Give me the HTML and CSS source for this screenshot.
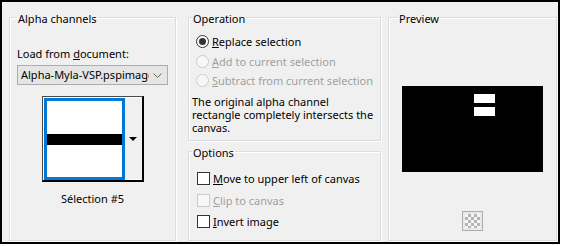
FILE: index.html
```html
<!DOCTYPE html>
<html lang="en">
<head>
  <meta charset="UTF-8" />
  <title>Load Selection From Alpha Channel</title>
  <link rel="stylesheet" href="styles.css">
</head>
<body>

  <div class="dialog">

    <fieldset class="group alpha">
      <legend>Alpha channels</legend>
      <div class="field-label">Load from <u>d</u>ocument:</div>
      <div class="combo">
        <span class="combo-text">Alpha-Myla-VSP.pspimage</span>
        <svg class="chevron" width="9" height="5" viewBox="0 0 9 5">
          <path d="M0.5 0.5 L4.5 4.5 L8.5 0.5" fill="none" stroke="#606060" stroke-width="1"/>
        </svg>
      </div>
      <div class="thumb">
        <div class="thumb-img">
          <div class="thumb-bar"></div>
        </div>
        <div class="thumb-drop">
          <span class="tri"></span>
        </div>
      </div>
      <div class="caption">Sélection #5</div>
    </fieldset>

    <div class="middle">
      <fieldset class="group operation">
        <legend>Operation</legend>
        <div class="radio-row">
          <span class="radio checked"></span>
          <span><u>R</u>eplace selection</span>
        </div>
        <div class="radio-row disabled">
          <span class="radio"></span>
          <span><u>A</u>dd to current selection</span>
        </div>
        <div class="radio-row disabled">
          <span class="radio"></span>
          <span><u>S</u>ubtract from current selection</span>
        </div>
        <p class="note">The original alpha channel<br>rectangle completely intersects the<br>canvas.</p>
      </fieldset>

      <fieldset class="group options">
        <legend>Options</legend>
        <div class="check-row">
          <span class="check"></span>
          <span><u>M</u>ove to upper left of canvas</span>
        </div>
        <div class="check-row disabled">
          <span class="check"></span>
          <span><u>C</u>lip to canvas</span>
        </div>
        <div class="check-row">
          <span class="check"></span>
          <span><u>I</u>nvert image</span>
        </div>
      </fieldset>
    </div>

    <fieldset class="group preview">
      <legend>Preview</legend>
      <div class="preview-canvas">
        <div class="preview-bar"></div>
        <div class="preview-bar"></div>
      </div>
      <div class="checker-btn">
        <div class="checker"></div>
      </div>
    </fieldset>

  </div>

</body>
</html>
```

FILE: styles.css
```css
* {
  margin: 0;
  padding: 0;
  box-sizing: border-box;
}

body {
  background: #ffffff;
  font-family: "Noto Sans", "Open Sans", sans-serif;
  font-size: 11px;
  color: #000;
}

.dialog {
  width: 560px;
  height: 244px;
  border: 2px solid #000;
  background: #f0f0f0;
  display: flex;
  padding: 5px 1px 1px 7px;
  white-space: nowrap;
}

.group {
  border: 1px solid #dcdcdc;
  box-shadow: inset 1px 1px 0 #fff, 1px 1px 0 #fff;
  min-width: 0;
  padding: 0 7px;
}

.group legend {
  line-height: 16px;
  padding: 4px 1px 0 1px;
  margin-left: 0;
}

u {
  text-decoration: underline;
  text-underline-offset: 1px;
}

/* Alpha channels */
.alpha {
  width: 167px;
  margin-right: 12px;
  display: flex;
  flex-direction: column;
}

.field-label {
  line-height: 16px;
  margin-top: 19px;
}

.combo {
  margin-top: 3px;
  width: 151px;
  height: 20px;
  border: 1px solid #adadad;
  background: #e5e5e5;
  display: flex;
  align-items: center;
  padding-left: 3px;
  padding-right: 5px;
}

.combo-text {
  flex: 1;
  overflow: hidden;
  line-height: 16px;
}

.chevron {
  margin-left: 4px;
  flex-shrink: 0;
}

.thumb {
  align-self: center;
  margin-top: 11px;
  width: 102px;
  height: 86px;
  border-style: solid;
  border-color: #4a4a4a #000 #000 #4a4a4a;
  border-width: 1px 2px 2px 1px;
  background: #fff;
  padding: 1px 0 1px 1px;
  display: flex;
}

.thumb-img {
  width: 81px;
  height: 82px;
  border: 3px solid #0078d7;
  background: #fff;
  padding-top: 33px;
}

.thumb-bar {
  height: 11px;
  background: #000;
}

.thumb-drop {
  flex: 1;
  background: #f0f0f0;
  display: flex;
  align-items: center;
  justify-content: center;
}

.tri {
  width: 0;
  height: 0;
  border-left: 4px solid transparent;
  border-right: 4px solid transparent;
  border-top: 4px solid #000;
  margin-top: 1px;
}

.caption {
  text-align: center;
  line-height: 16px;
  margin-top: 9px;
}

/* Middle column */
.middle {
  width: 193px;
  display: flex;
  flex-direction: column;
  margin-right: 7px;
}

.operation {
  height: 134px;
  padding: 0 3px;
}

.radio-row,
.check-row {
  display: flex;
  align-items: center;
  gap: 3px;
  margin-left: 4px;
}

.radio-row {
  height: 19.5px;
}

.radio-row:first-of-type {
  margin-top: 5px;
}

.radio {
  width: 13px;
  height: 13px;
  border: 1px solid #333;
  border-radius: 50%;
  background: #fff;
  display: flex;
  align-items: center;
  justify-content: center;
}

.radio.checked::after {
  content: "";
  width: 7px;
  height: 7px;
  border-radius: 50%;
  background: #333;
}

.disabled {
  color: #a0a0a0;
}

.disabled .radio,
.disabled .check {
  border-color: #cccccc;
  background: #f7f7f7;
}

.note {
  line-height: 13px;
  margin-top: 4px;
}

.options {
  flex: 1;
  padding: 0 3px;
}

.check-row {
  height: 21.5px;
  margin-left: 5px;
}

.check-row:first-of-type {
  margin-top: 7px;
}

.check {
  width: 13px;
  height: 13px;
  border: 1px solid #333;
  background: #fff;
}

/* Preview */
.preview {
  flex: 1;
  display: flex;
  flex-direction: column;
  align-items: center;
}

.preview legend {
  margin-left: 2px;
}

.preview-canvas {
  margin-top: 59px;
  width: 141px;
  height: 86px;
  background: #000;
  padding: 8px 0 0 72px;
  display: flex;
  flex-direction: column;
  gap: 4px;
}

.preview-bar {
  width: 21px;
  height: 9px;
  background: #fff;
}

.checker-btn {
  margin-top: 39px;
  width: 21px;
  height: 20px;
  border: 1px solid #adadad;
  background: #e9e9e9;
  padding: 2px;
}

.checker {
  width: 100%;
  height: 100%;
  background: repeating-conic-gradient(#b4b4b4 0 25%, #f4f4f4 0 50%) 0 0 / 6px 6px;
}
```
